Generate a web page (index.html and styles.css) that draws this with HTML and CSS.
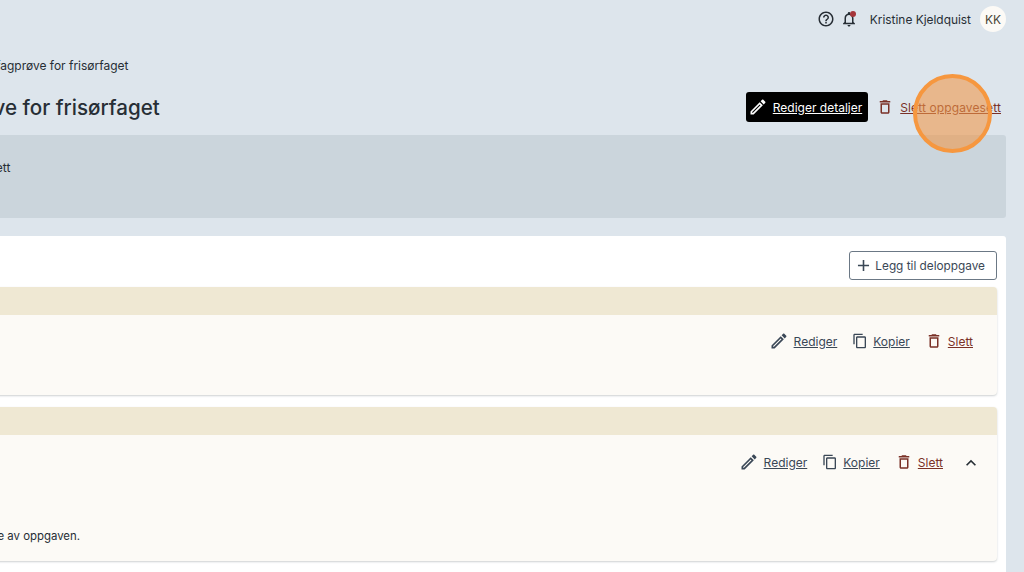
FILE: index.html
```html
<!DOCTYPE html>
<html lang="en">
<head>
    <meta charset="UTF-8">
    <meta name="viewport" content="width=device-width, initial-scale=1.0">
    <title>Fagprøve for frisørfaget</title>
    <link rel="stylesheet" href="styles.css">
</head>
<body>
    <svg class="icon-defs" aria-hidden="true">
        <symbol id="i-edit" viewBox="0 0 24 24"><path d="M3 17.25V21h3.75L17.81 9.94l-3.75-3.75L3 17.25zM5.92 19H5v-.92l9.06-9.06.92.92L5.92 19zM20.71 5.63l-2.34-2.34c-.2-.2-.45-.29-.71-.29s-.51.1-.7.29l-1.83 1.83 3.75 3.75 1.83-1.83c.39-.39.39-1.02 0-1.41z"/></symbol>
        <symbol id="i-copy" viewBox="0 0 24 24"><path d="M16 1H4c-1.1 0-2 .9-2 2v14h2V3h12V1zm3 4H8c-1.1 0-2 .9-2 2v14c0 1.1.9 2 2 2h11c1.1 0 2-.9 2-2V7c0-1.1-.9-2-2-2zm0 16H8V7h11v14z"/></symbol>
        <symbol id="i-delete" viewBox="0 0 24 24"><path d="M6 19c0 1.1.9 2 2 2h8c1.1 0 2-.9 2-2V7H6v12zM8 9h8v10H8V9zm7.5-5l-1-1h-5l-1 1H5v2h14V4h-3.5z"/></symbol>
        <symbol id="i-help" viewBox="0 0 24 24"><path d="M11 18h2v-2h-2v2zm1-16C6.48 2 2 6.48 2 12s4.48 10 10 10 10-4.48 10-10S17.52 2 12 2zm0 18c-4.41 0-8-3.59-8-8s3.59-8 8-8 8 3.59 8 8-3.59 8-8 8zm0-14c-2.21 0-4 1.79-4 4h2c0-1.1.9-2 2-2s2 .9 2 2c0 2-3 1.75-3 5h2c0-2.25 3-2.5 3-5 0-2.21-1.79-4-4-4z"/></symbol>
        <symbol id="i-bell" viewBox="0 0 24 24"><path d="M12 22c1.1 0 2-.9 2-2h-4c0 1.1.9 2 2 2zm6-6v-5c0-3.07-1.63-5.64-4.5-6.32V4c0-.83-.67-1.5-1.5-1.5s-1.5.67-1.5 1.5v.68C7.64 5.36 6 7.92 6 11v5l-2 2v1h16v-1l-2-2zm-2 1H8v-6c0-2.48 1.51-4.5 4-4.5s4 2.02 4 4.5v6z"/></symbol>
        <symbol id="i-add" viewBox="0 0 24 24"><path d="M19 13h-6v6h-2v-6H5v-2h6V5h2v6h6v2z"/></symbol>
        <symbol id="i-up" viewBox="0 0 24 24"><path d="M12 8l-6 6 1.41 1.41L12 10.83l4.59 4.58L18 14z"/></symbol>
    </svg>

    <header class="topbar">
        <svg class="icon icon-help"><use href="#i-help"/></svg>
        <span class="bell">
            <svg class="icon"><use href="#i-bell"/></svg>
            <span class="bell-dot"></span>
        </span>
        <span class="user-name">Kristine Kjeldquist</span>
        <span class="avatar">KK</span>
    </header>

    <main class="page">
        <div class="breadcrumb">Oppgavesett / En fagprøve for frisørfaget</div>
        <div class="title-row">
            <h1>En fagprøve for frisørfaget</h1>
            <div class="title-actions">
                <a class="btn-dark" href="#">
                    <svg class="icon icon-edit"><use href="#i-edit"/></svg>
                    <span>Rediger detaljer</span>
                </a>
                <a class="link link-red" href="#">
                    <svg class="icon"><use href="#i-delete"/></svg>
                    <span>Slett oppgavesett</span>
                </a>
            </div>
        </div>

        <section class="info-panel">
            <p>Om dette oppgavesett</p>
        </section>

        <section class="card">
            <div class="card-top">
                <a class="btn-outline" href="#">
                    <svg class="icon icon-add"><use href="#i-add"/></svg>
                    <span>Legg til deloppgave</span>
                </a>
            </div>

            <article class="task task-short">
                <div class="task-head"></div>
                <div class="task-body">
                    <div class="task-actions">
                        <a class="link" href="#"><svg class="icon icon-edit"><use href="#i-edit"/></svg><span>Rediger</span></a>
                        <a class="link" href="#"><svg class="icon icon-copy"><use href="#i-copy"/></svg><span>Kopier</span></a>
                        <a class="link link-red" href="#"><svg class="icon"><use href="#i-delete"/></svg><span>Slett</span></a>
                    </div>
                </div>
            </article>

            <article class="task task-open">
                <div class="task-head"></div>
                <div class="task-body">
                    <div class="task-actions">
                        <a class="link" href="#"><svg class="icon icon-edit"><use href="#i-edit"/></svg><span>Rediger</span></a>
                        <a class="link" href="#"><svg class="icon icon-copy"><use href="#i-copy"/></svg><span>Kopier</span></a>
                        <a class="link link-red" href="#"><svg class="icon"><use href="#i-delete"/></svg><span>Slett</span></a>
                        <svg class="icon icon-chevron"><use href="#i-up"/></svg>
                    </div>
                    <p class="task-text">Gjør rede for alle dele av oppgaven.</p>
                </div>
            </article>
        </section>
    </main>

    <div class="click-marker"></div>
</body>
</html>
```

FILE: styles.css
```css
html, body {
    height: 100%;
}
body {
    margin: 0;
    overflow: hidden;
    position: relative;
    background-color: #dde5ec;
    font-family: Inter, "Liberation Sans", sans-serif;
    font-size: 12px;
    color: #272e35;
}
a {
    color: inherit;
}
.icon-defs {
    display: none;
}
.icon {
    width: 18px;
    height: 18px;
    fill: currentColor;
    flex: none;
}
.icon-edit {
    width: 20px;
    height: 20px;
}
.icon-copy {
    width: 16px;
    height: 16px;
}
.icon-add {
    width: 19px;
    height: 19px;
}
.topbar {
    display: flex;
    justify-content: flex-end;
    align-items: center;
    height: 38px;
    padding-right: 18px;
}
.icon-help {
    margin-right: 5px;
}
.bell {
    position: relative;
    display: flex;
    margin-right: 12px;
}
.bell-dot {
    position: absolute;
    top: 1px;
    right: 2px;
    width: 6px;
    height: 6px;
    border-radius: 50%;
    background-color: #a5353a;
}
.user-name {
    margin-right: 9px;
    font-size: 11.9px;
}
.avatar {
    display: flex;
    align-items: center;
    justify-content: center;
    width: 26px;
    height: 26px;
    border-radius: 50%;
    background-color: #fcfaf6;
    color: #4a4536;
}
.page {
    width: 1111px;
    margin-left: -105px;
}
.breadcrumb {
    margin-top: 20px;
    line-height: 15px;
    white-space: nowrap;
}
.title-row {
    display: flex;
    justify-content: space-between;
    align-items: center;
    height: 30px;
    margin-top: 19px;
    padding-right: 5px;
}
h1 {
    margin: 0 0 0 4px;
    font-size: 20.6px;
    font-weight: 500;
    white-space: nowrap;
}
.title-actions {
    display: flex;
    align-items: center;
    gap: 8px;
}
.btn-dark {
    display: flex;
    align-items: center;
    gap: 5px;
    height: 30px;
    padding: 0 6px 0 2px;
    border-radius: 3px;
    background-color: #000;
    color: #fff;
}
.link {
    display: flex;
    align-items: center;
    gap: 5px;
    color: #3a4756;
}
.title-actions .link {
    gap: 6px;
    letter-spacing: 0.01em;
}
.link-red {
    color: #7a3127;
}
.info-panel {
    height: 83px;
    margin-top: 13px;
    background-color: #cbd5dc;
    border-radius: 3px;
    overflow: hidden;
}
.info-panel p {
    margin: 25px 0 0 -10px;
    line-height: 15px;
}
.card {
    margin-top: 18px;
    height: 400px;
    padding: 15px 9px 0 0;
    background-color: #fff;
    border-radius: 3px 3px 0 0;
}
.card-top {
    display: flex;
    justify-content: flex-end;
}
.btn-outline {
    display: flex;
    align-items: center;
    gap: 2px;
    height: 27px;
    padding: 0 11px 0 4px;
    border: 1px solid #6b7885;
    border-radius: 3px;
    text-decoration: none;
    color: #3a4756;
    font-size: 11.8px;
}
.task {
    margin-top: 12px;
    border-radius: 4px;
    background-color: #fcfaf6;
    box-shadow: 0 1px 2px rgba(60, 70, 80, 0.25);
}
.task-short {
    margin-top: 7px;
}
.task-head {
    height: 28px;
    background-color: #efe8d3;
    border-radius: 4px 4px 0 0;
}
.task-body {
    padding-top: 17px;
}
.task-short .task-body {
    height: 63px;
}
.task-open .task-body {
    height: 108px;
    padding-top: 18px;
}
.task-actions {
    display: flex;
    justify-content: flex-end;
    align-items: center;
    gap: 15px;
    height: 18px;
    padding-right: 24px;
}
.icon-chevron {
    width: 20px;
    height: 20px;
    margin: 2px -8px 0 3px;
    color: #272e35;
}
.task-text {
    margin: 58px 0 0 -7px;
    font-size: 11.4px;
    line-height: 15px;
    white-space: nowrap;
}
.click-marker {
    position: absolute;
    left: 913px;
    top: 74px;
    width: 79px;
    height: 79px;
    box-sizing: border-box;
    border: 4px solid #f6973f;
    border-radius: 50%;
    background-color: rgba(240, 150, 70, 0.58);
}
```
